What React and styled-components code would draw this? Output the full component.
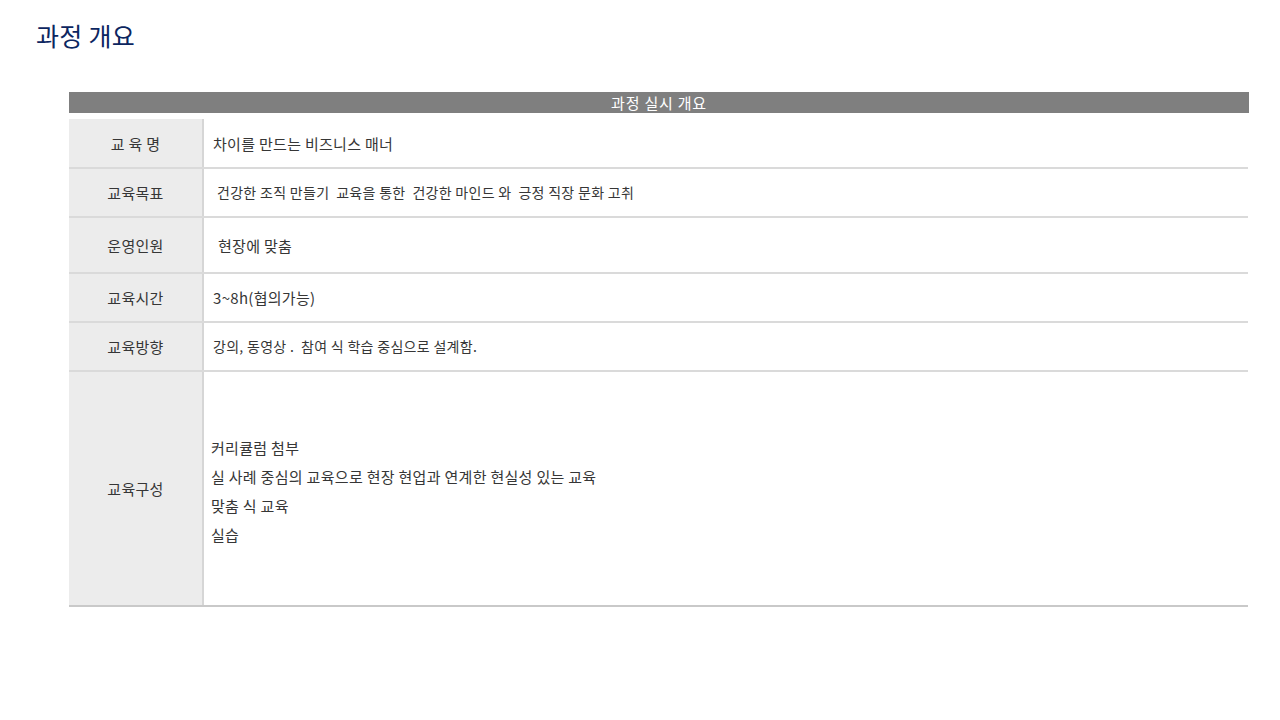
import React from "react";
import styled, { createGlobalStyle } from "styled-components";

const GlobalStyle = createGlobalStyle`
  html, body {
    margin: 0;
    padding: 0;
    background: #ffffff;
  }
  body {
    font-family: "Noto Sans CJK KR", "Noto Sans", sans-serif;
    color: #333333;
  }
`;

const Page = styled.div`
  width: 1280px;
  height: 720px;
  box-sizing: border-box;
  padding: 17px 0 0 0;
  overflow: hidden;
`;

const Title = styled.h1`
  margin: 0 0 0 36px;
  font-size: 25px;
  line-height: 36px;
  font-weight: 400;
  color: #0c2660;
  letter-spacing: 0.3px;
`;

const Section = styled.section`
  margin: 39px 0 0 69px;
  width: 1180px;
  display: flex;
  flex-direction: column;
  gap: 6px;
`;

const HeaderBar = styled.div`
  height: 21px;
  background: #7f7f7f;
  color: #ffffff;
  font-size: 15px;
  line-height: 21px;
  text-align: center;
  letter-spacing: 0.8px;
`;

const Table = styled.div`
  width: 1179px;
  display: flex;
  flex-direction: column;
`;

const Row = styled.div`
  display: grid;
  grid-template-columns: 135px 1fr;
  height: ${(p) => p.$h}px;
  box-sizing: border-box;
  border-bottom: 2px solid ${(p) => (p.$last ? "#c9c9c9" : "#dadada")};
`;

const Label = styled.div`
  background: #ececec;
  border-right: 2px solid #d6d6d6;
  display: flex;
  align-items: center;
  justify-content: center;
  font-size: 15px;
  color: #363636;
  letter-spacing: 0.3px;
  white-space: pre;
`;

const Content = styled.div`
  display: flex;
  flex-direction: column;
  justify-content: center;
  padding-left: ${(p) => p.$pad ?? 9}px;
  padding-top: ${(p) => p.$top ?? 0}px;
  font-size: ${(p) => p.$size ?? 15}px;
  color: #363636;
  letter-spacing: 0.3px;
  white-space: pre;
`;

const Line = styled.div`
  line-height: 29px;
`;

const rows = [
  { label: "교 육 명", h: 50, pad: 9, lines: ["차이를 만드는 비즈니스 매너"] },
  { label: "교육목표", h: 49, pad: 13, size: 14, lines: ["건강한 조직 만들기  교육을 통한  건강한 마인드 와  긍정 직장 문화 고취"] },
  { label: "운영인원", h: 56, pad: 14, lines: ["현장에 맞춤"] },
  { label: "교육시간", h: 49, pad: 9, lines: ["3~8h(협의가능)"] },
  { label: "교육방향", h: 49, pad: 9, size: 14, lines: ["강의, 동영상 .  참여 식 학습 중심으로 설계함."] },
  {
    label: "교육구성",
    h: 235,
    pad: 7,
    top: 4,
    lines: [
      "커리큘럼 첨부",
      "실 사례 중심의 교육으로 현장 현업과 연계한 현실성 있는 교육",
      "맞춤 식 교육",
      "실습",
    ],
  },
];

export default function App() {
  return (
    <>
      <GlobalStyle />
      <Page>
        <Title>과정 개요</Title>
        <Section>
          <HeaderBar>과정 실시 개요</HeaderBar>
          <Table>
            {rows.map((r, i) => (
              <Row key={r.label} $h={r.h} $last={i === rows.length - 1}>
                <Label>{r.label}</Label>
                <Content $pad={r.pad} $top={r.top} $size={r.size}>
                  {r.lines.map((l) => (
                    <Line key={l}>{l}</Line>
                  ))}
                </Content>
              </Row>
            ))}
          </Table>
        </Section>
      </Page>
    </>
  );
}
